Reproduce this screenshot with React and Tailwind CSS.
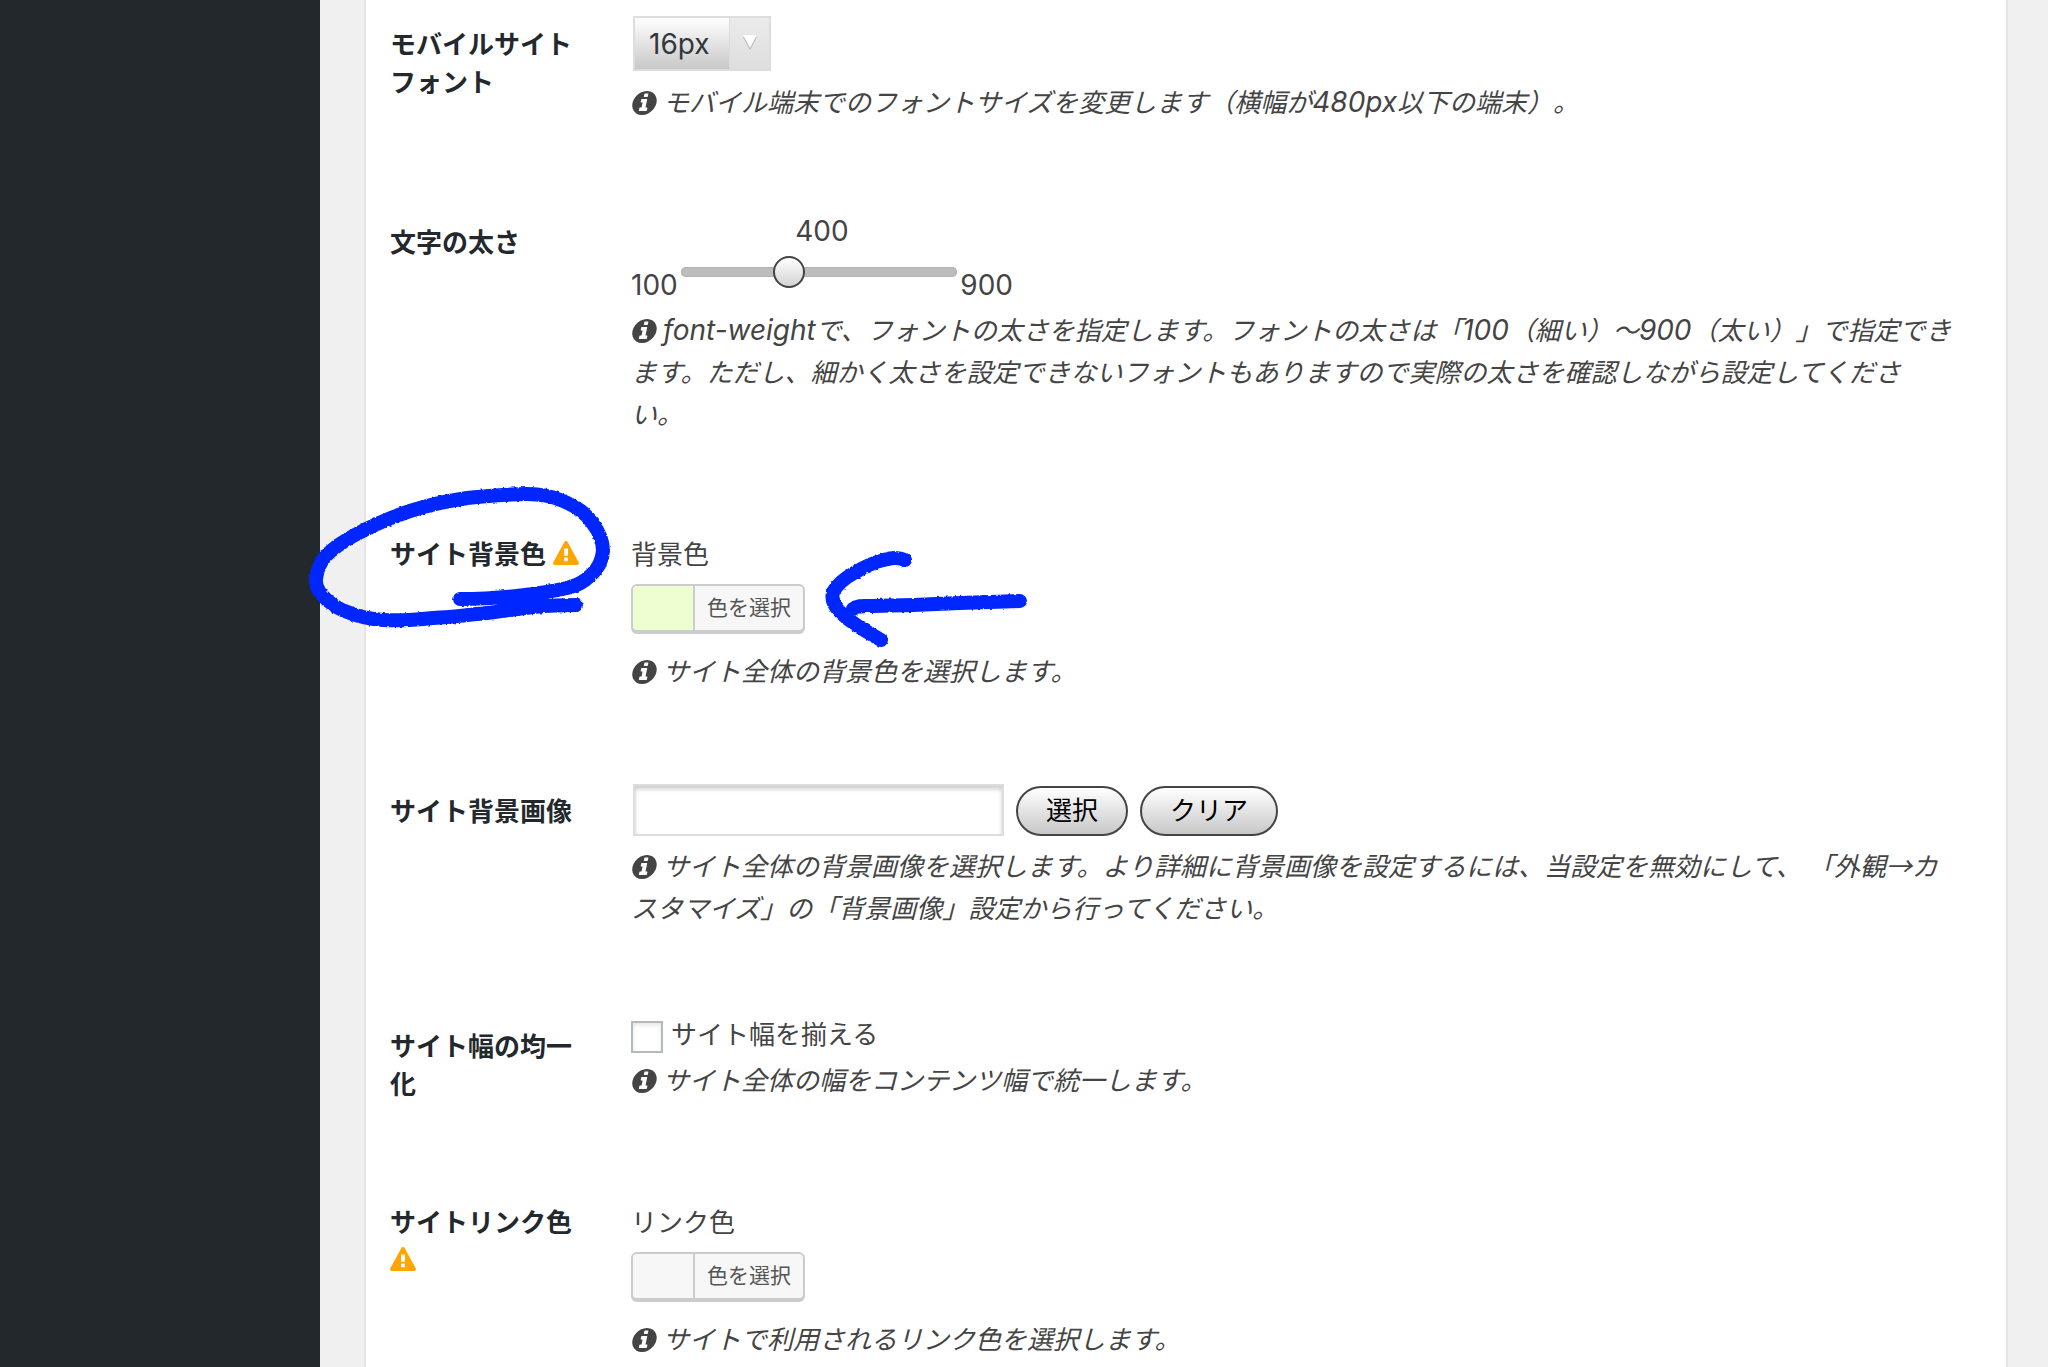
import React, { useState } from "react";

const InfoIcon = () => (
  <svg
    viewBox="128 128 1536 1536"
    className="inline-block w-6 h-6 ml-px mr-[7px] align-[-3px] overflow-visible"
    fill="currentColor"
    aria-hidden="true"
  >
    <path
      transform="translate(220 0) skewX(-12)"
      d="M1152 1376v-160q0-14-9-23t-23-9h-96v-512q0-14-9-23t-23-9h-320q-14 0-23 9t-9 23v160q0 14 9 23t23 9h96v320h-96q-14 0-23 9t-9 23v160q0 14 9 23t23 9h448q14 0 23-9t9-23zm-128-896v-160q0-14-9-23t-23-9h-192q-14 0-23 9t-9 23v160q0 14 9 23t23 9h192q14 0 23-9t9-23zm640 416q0 209-103 385.5t-279.5 279.5-385.5 103-385.5-103-279.5-279.5-103-385.5 103-385.5 279.5-279.5 385.5-103 385.5 103 279.5 279.5 103 385.5z"
    />
  </svg>
);

const WarningIcon = () => (
  <svg
    viewBox="0 0 1792 1664"
    className="inline-block w-[26px] h-6 align-[-1px]"
    fill="#ffa500"
    aria-hidden="true"
  >
    <path d="M1024 1375v-190q0-14-9.5-23.5t-22.5-9.5h-192q-13 0-22.5 9.5t-9.5 23.5v190q0 14 9.5 23.5t22.5 9.5h192q13 0 22.5-9.5t9.5-23.5zm-2-374l18-459q0-12-10-19-13-11-24-11h-220q-11 0-24 11-10 7-10 21l17 457q0 10 10 16.5t24 6.5h185q14 0 23.5-6.5t10.5-16.5zm-14-934l768 1408q35 63-2 126-17 29-46.5 46t-63.5 17h-1536q-34 0-63.5-17t-46.5-46q-37-63-2-126l768-1408q17-31 47-49t65-18 65 18 47 49z" />
  </svg>
);

const Row = ({ title, warning, htmlFor, children }) => (
  <div className="flex gap-[49px] pb-[68px]">
    <label
      htmlFor={htmlFor}
      className="w-48 shrink-0 pt-8 leading-[38px] font-semibold text-[#23282d]"
    >
      {title}
      {warning && (
        <>
          {" "}
          <WarningIcon />
        </>
      )}
    </label>
    <div className="flex-1 min-w-0 pt-[18px]">{children}</div>
  </div>
);

const Tips = ({ children }) => (
  <p className="italic">
    <InfoIcon />
    {children}
  </p>
);

// latin runs sit a touch larger than the kana around them
const Latin = ({ children }) => (
  <span className="text-[28px] leading-none">{children}</span>
);

const PillButton = ({ children }) => (
  <button
    type="button"
    className="h-[50px] px-7 rounded-full border-2 border-[#444] bg-linear-to-b from-white to-[#c8c8c8] text-black leading-[42px]"
  >
    {children}
  </button>
);

const ColorPicker = ({ id, label, swatch }) => (
  <div className="pt-3">
    <p>{label}</p>
    <button
      id={id}
      type="button"
      className="flex h-12 mt-2 mb-[19px] rounded-md border-2 border-[#ccc] bg-[#f7f7f7] shadow-[0_2px_0_#ccc] overflow-hidden text-[21px] leading-[44px] text-[#555]"
    >
      <span className={`w-[60px] self-stretch ${swatch}`}></span>
      <span className="border-l-2 border-[#ccc] px-3">色を選択</span>
    </button>
  </div>
);

const CIRCLE =
  "M576 605C560 605 545 606 533 607C515 609 503 611 487 613C467 615 452 617 433 618C415 620 400 621 383 620C370 619 360 617 350 613C340 610 334 606 327 600C319 593 315 587 316 579C317 570 319 564 325 557C333 548 341 543 353 536C371 526 389 518 410 511C429 505 447 501 467 498C487 496 507 494 527 494C542 494 552 496 563 501C577 507 586 513 593 524C600 533 603 541 603 551C602 561 599 568 591 575C583 583 577 585 567 588C550 592 535 594 517 596C497 598 478 599 460 599";
const ARROW_HEAD =
  "M905 560C898 557 890 558 884 560C874 562 864 567 854 573C845 578 837 585 833 592C831 600 834 606 840 612C850 622 862 629 881 640";
const ARROW_SHAFT = "M853 609C858 605 864 606 872 606L913 605L960 603L1020 601";

// hand-drawn marker strokes over the form
const Marker = () => (
  <svg
    className="absolute left-0 top-0 pointer-events-none"
    width="1100"
    height="700"
    viewBox="0 0 1100 700"
    fill="none"
    stroke="#0026ff"
    strokeWidth="14"
    strokeLinecap="round"
    strokeLinejoin="round"
    aria-hidden="true"
  >
    <filter id="rough" x="-5%" y="-5%" width="110%" height="110%">
      <feTurbulence type="fractalNoise" baseFrequency="0.35" numOctaves="1" seed="4" />
      <feDisplacementMap
        in="SourceGraphic"
        scale="3"
        xChannelSelector="R"
        yChannelSelector="G"
      />
    </filter>
    <g filter="url(#rough)">
      <path d={CIRCLE} />
      <path d={ARROW_HEAD} />
      <path d={ARROW_SHAFT} />
    </g>
  </svg>
);

export default function App() {
  const [fontSize, setFontSize] = useState("16px");
  const [weight, setWeight] = useState(400);
  const [image, setImage] = useState("");
  const [uniform, setUniform] = useState(false);

  return (
    <div
      lang="ja"
      className="relative flex h-screen overflow-hidden bg-[#f0f0f0] text-[26px] leading-[42px] text-[#444] font-[Inter,'Noto_Sans_CJK_JP',sans-serif] [text-spacing-trim:space-all]"
    >
      <aside className="w-80 shrink-0 bg-[#23282d]"></aside>

      <main className="flex-1 min-w-0 ml-11 mr-10">
        <form className="-mt-1.5 pl-6 pr-[50px] bg-white border-x-2 border-[#e5e5e5]">
          <Row title="モバイルサイトフォント" htmlFor="mobile-font">
            <div className="relative mt-1 mb-[11px] ml-0.5 w-[138px]">
              <select
                id="mobile-font"
                value={fontSize}
                onChange={(e) => setFontSize(e.target.value)}
                className="block appearance-none w-full h-[55px] pl-3.5 border-2 border-[#ddd] bg-linear-to-b from-white to-[#c8c8c8] text-[28px] text-[#32373c]"
              >
                <option>14px</option>
                <option>16px</option>
                <option>18px</option>
              </select>
              <span className="absolute right-0.5 inset-y-0.5 w-10 flex items-center justify-center border-l border-[#ddd] bg-linear-to-b from-[#ebebeb] to-[#dedede] pointer-events-none">
                <svg viewBox="0 0 16 16" className="w-4 h-4 mb-1" aria-hidden="true">
                  <path d="M1 3h14L8 16z" fill="#b5b5b5" />
                  <path d="M1 1h14L8 14z" fill="#fff" />
                </svg>
              </span>
            </div>
            <Tips>
              モバイル端末でのフォントサイズを変更します（横幅が<Latin>480px</Latin>
              以下の端末）。
            </Tips>
          </Row>

          <Row title="文字の太さ" htmlFor="font-weight">
            <div className="w-[382px]">
              <output htmlFor="font-weight" className="block text-center text-[28px]">
                {weight}
              </output>
              <div className="flex items-start justify-between mb-1 text-[28px]">
                <span className="mt-3">100</span>
                <input
                  id="font-weight"
                  type="range"
                  min="100"
                  max="900"
                  step="100"
                  value={weight}
                  onChange={(e) => setWeight(Number(e.target.value))}
                  className="appearance-none w-[276px] h-10 bg-transparent [&::-webkit-slider-runnable-track]:h-2.5 [&::-webkit-slider-runnable-track]:rounded-full [&::-webkit-slider-runnable-track]:bg-[#bdbdbd] [&::-webkit-slider-runnable-track]:shadow-[inset_0_0_2px_#999] [&::-webkit-slider-thumb]:appearance-none [&::-webkit-slider-thumb]:w-8 [&::-webkit-slider-thumb]:h-8 [&::-webkit-slider-thumb]:-mt-[11px] [&::-webkit-slider-thumb]:rounded-full [&::-webkit-slider-thumb]:border-2 [&::-webkit-slider-thumb]:border-[#444] [&::-webkit-slider-thumb]:bg-linear-to-b [&::-webkit-slider-thumb]:from-white [&::-webkit-slider-thumb]:to-[#d4d4d4]"
                />
                <span className="mt-3">900</span>
              </div>
            </div>
            <Tips>
              <Latin>font-weight</Latin>
              で、フォントの太さを指定します。フォントの太さは「<Latin>100</Latin>
              （細い）〜<Latin>900</Latin>
              （太い）」で指定できます。ただし、細かく太さを設定できないフォントもありますので実際の太さを確認しながら設定してくださ
              <br />
              い。
            </Tips>
          </Row>

          <Row title="サイト背景色" warning htmlFor="site-bg">
            <ColorPicker id="site-bg" label="背景色" swatch="bg-[#edffd1]" />
            <Tips>サイト全体の背景色を選択します。</Tips>
          </Row>

          <Row title="サイト背景画像" htmlFor="site-bg-image">
            <div className="flex items-end gap-3 mt-[5px] mb-2 ml-0.5">
              <input
                id="site-bg-image"
                type="text"
                value={image}
                onChange={(e) => setImage(e.target.value)}
                className="w-[371px] h-[52px] px-2.5 border-2 border-[#ddd] bg-white shadow-[inset_0_3px_4px_#ccc]"
              />
              <PillButton>選択</PillButton>
              <PillButton>クリア</PillButton>
            </div>
            <div className="font-['Noto_Sans_CJK_JP',sans-serif]">
              <Tips>
                サイト全体の背景画像を選択します。より詳細に背景画像を設定するには、当設定を無効にして、 「外観→カスタマイズ」の「背景画像」設定から行ってください。
              </Tips>
            </div>
          </Row>

          <Row title="サイト幅の均一化" htmlFor="site-width">
            <label className="flex items-center gap-2 mb-1">
              <input
                id="site-width"
                type="checkbox"
                checked={uniform}
                onChange={(e) => setUniform(e.target.checked)}
                className="appearance-none w-8 h-8 mt-1 border-2 border-[#b4b9be] bg-white shadow-[inset_0_2px_4px_#e5e5e5] checked:bg-[#1e8cbe]"
              />
              サイト幅を揃える
            </label>
            <Tips>サイト全体の幅をコンテンツ幅で統一します。</Tips>
          </Row>

          <Row title="サイトリンク色" warning htmlFor="site-link">
            <ColorPicker id="site-link" label="リンク色" swatch="bg-[#f7f7f7]" />
            <Tips>サイトで利用されるリンク色を選択します。</Tips>
          </Row>
        </form>
      </main>

      <Marker />
    </div>
  );
}
